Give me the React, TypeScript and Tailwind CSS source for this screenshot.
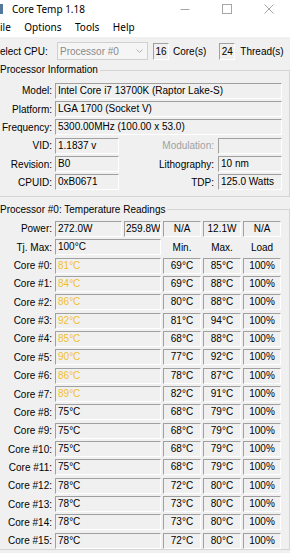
import type { ReactNode } from 'react'

const sunken =
  'h-[16px] border border-t-[#a0a0a0] border-l-[#a0a0a0] border-b-white border-r-white bg-[#f0f0f0] leading-[14px] whitespace-nowrap overflow-hidden'

const cores = [
  { t: 81, min: 69, max: 85 },
  { t: 84, min: 69, max: 88 },
  { t: 86, min: 80, max: 88 },
  { t: 92, min: 81, max: 94 },
  { t: 85, min: 68, max: 88 },
  { t: 90, min: 77, max: 92 },
  { t: 86, min: 78, max: 87 },
  { t: 89, min: 82, max: 91 },
  { t: 75, min: 68, max: 79 },
  { t: 75, min: 68, max: 79 },
  { t: 75, min: 68, max: 79 },
  { t: 75, min: 68, max: 79 },
  { t: 78, min: 72, max: 80 },
  { t: 78, min: 73, max: 80 },
  { t: 78, min: 73, max: 80 },
  { t: 78, min: 72, max: 80 },
]

function Label({ children, dim }: { children: ReactNode; dim?: boolean }) {
  return (
    <div className={`w-[52px] shrink-0 whitespace-nowrap text-right ${dim ? 'text-[#a0a0a0]' : ''}`}>
      {children}
    </div>
  )
}

function Field({ children, className = '' }: { children?: ReactNode; className?: string }) {
  return <div className={`${sunken} pl-[2px] ${className}`}>{children}</div>
}

function Cell({ children, className = '' }: { children?: ReactNode; className?: string }) {
  return <div className={`${sunken} w-[38px] shrink-0 text-center ${className}`}>{children}</div>
}

function Group({ title, children, className = '' }: { title: string; children: ReactNode; className?: string }) {
  return (
    <fieldset className={`border border-l-0 border-[#d5d5d5] pr-[7px] ${className}`}>
      <legend className="pr-[2px] leading-[12px]">{title}</legend>
      {children}
    </fieldset>
  )
}

export default function App() {
  return (
    <div
      className="h-[553px] w-[290px] overflow-hidden bg-[#f0f0f0] text-[10px] text-black"
      style={{ fontFamily: '"Liberation Sans", Arial, sans-serif' }}
    >
      {/* title bar */}
      <div className="flex h-[17px] items-center bg-white" style={{ fontFamily: '"Noto Sans", sans-serif' }}>
        <div className="h-[10px] w-[3px] bg-[#56779c]" />
        <span className="ml-[9px] leading-none">Core Temp 1.18</span>
        <div className="ml-auto flex h-full">
          <div className="flex w-[42px] items-center justify-center">
            <svg width="10" height="10" viewBox="0 0 10 10">
              <path d="M0.5 5.5h9" stroke="#a6a6a6" strokeWidth="1" />
            </svg>
          </div>
          <div className="flex w-[42px] items-center justify-center">
            <svg width="10" height="10" viewBox="0 0 10 10">
              <rect x="0.5" y="0.5" width="9" height="9" fill="none" stroke="#a6a6a6" strokeWidth="1" />
            </svg>
          </div>
          <div className="flex w-[42px] items-center justify-center">
            <svg width="10" height="10" viewBox="0 0 10 10">
              <path d="M0.5 0.5l9 9M9.5 0.5l-9 9" stroke="#a6a6a6" strokeWidth="1" />
            </svg>
          </div>
        </div>
      </div>

      {/* menu bar */}
      <div className="flex h-[20px] items-center gap-[13.5px] bg-white" style={{ fontFamily: '"Noto Sans", sans-serif' }}>
        <span>ile</span>
        <span>Options</span>
        <span>Tools</span>
        <span>Help</span>
      </div>

      {/* cpu select */}
      <div className="mt-[5px] flex h-[18px] items-center">
        <div className="w-[57px] shrink-0 whitespace-nowrap">elect CPU:</div>
        <div className="flex h-[18px] w-[91px] items-center justify-between border border-[#d0d0d0] bg-[#f5f5f5] pl-[2px] pr-[4px] text-[#8a8a8a]">
          <span>Processor #0</span>
          <svg width="7" height="4" viewBox="0 0 7 4">
            <path d="M0.5 0.5l3 3 3-3" fill="none" stroke="#b0b0b0" strokeWidth="1" />
          </svg>
        </div>
        <div className={`${sunken} ml-[5px] h-[17px] w-[16px] text-center leading-[15px]`}>16</div>
        <span className="ml-[4px]">Core(s)</span>
        <div className={`${sunken} ml-[13px] h-[17px] w-[16px] text-center leading-[15px]`}>24</div>
        <span className="ml-[5px]">Thread(s)</span>
      </div>

      {/* processor information */}
      <Group title="Processor Information" className="mt-[4px] pb-[6px] pt-[6.7px]">
        <div className="flex flex-col gap-[2.35px]">
          <div className="flex h-[16px] items-center gap-[3px]">
            <Label>Model:</Label>
            <Field className="flex-1">Intel Core i7 13700K (Raptor Lake-S)</Field>
          </div>
          <div className="flex h-[16px] items-center gap-[3px]">
            <Label>Platform:</Label>
            <Field className="flex-1">LGA 1700 (Socket V)</Field>
          </div>
          <div className="flex h-[16px] items-center gap-[3px]">
            <Label>Frequency:</Label>
            <Field className="flex-1">5300.00MHz (100.00 x 53.0)</Field>
          </div>
          <div className="flex h-[16px] items-center">
            <Label>VID:</Label>
            <Field className="ml-[3px] w-[64px]">1.1837 v</Field>
            <div className="flex-1 whitespace-nowrap text-right text-[#a0a0a0]">Modulation:</div>
            <Field className="ml-[4px] w-[64px]" />
          </div>
          <div className="flex h-[16px] items-center">
            <Label>Revision:</Label>
            <Field className="ml-[3px] w-[64px]">B0</Field>
            <div className="flex-1 whitespace-nowrap text-right">Lithography:</div>
            <Field className="ml-[4px] w-[64px]">10 nm</Field>
          </div>
          <div className="flex h-[16px] items-center">
            <Label>CPUID:</Label>
            <Field className="ml-[3px] w-[64px]">0xB0671</Field>
            <div className="flex-1 whitespace-nowrap text-right">TDP:</div>
            <Field className="ml-[4px] w-[64px]">125.0 Watts</Field>
          </div>
        </div>
      </Group>

      {/* temperature readings */}
      <Group title="Processor #0: Temperature Readings" className="mt-[6.5px] pb-[0.5px] pt-[5px]">
        <div className="flex flex-col gap-[2.35px]">
          <div className="flex h-[16px] items-center gap-[2px]">
            <Label>Power:</Label>
            <Field className="ml-[1px] w-[67px] shrink-0">272.0W</Field>
            <div className={`${sunken} w-[37px] shrink-0 pl-[1px]`}>259.8W</div>
            <Cell>N/A</Cell>
            <Cell>12.1W</Cell>
            <Cell>N/A</Cell>
          </div>
          <div className="flex h-[16px] items-center gap-[2px]">
            <Label>Tj. Max:</Label>
            <Field className="ml-[1px] w-[106px] shrink-0">100°C</Field>
            <div className="w-[38px] shrink-0 text-center">Min.</div>
            <div className="w-[38px] shrink-0 text-center">Max.</div>
            <div className="w-[38px] shrink-0 text-center">Load</div>
          </div>
          {cores.map((c, i) => (
            <div key={i} className="flex h-[16px] items-center gap-[2px]">
              <Label>Core #{i}:</Label>
              <Field className={`ml-[1px] w-[106px] shrink-0 ${i < 8 ? 'text-[#f2bf2c]' : ''}`}>{c.t}°C</Field>
              <Cell>{c.min}°C</Cell>
              <Cell>{c.max}°C</Cell>
              <Cell>100%</Cell>
            </div>
          ))}
        </div>
      </Group>
    </div>
  )
}
